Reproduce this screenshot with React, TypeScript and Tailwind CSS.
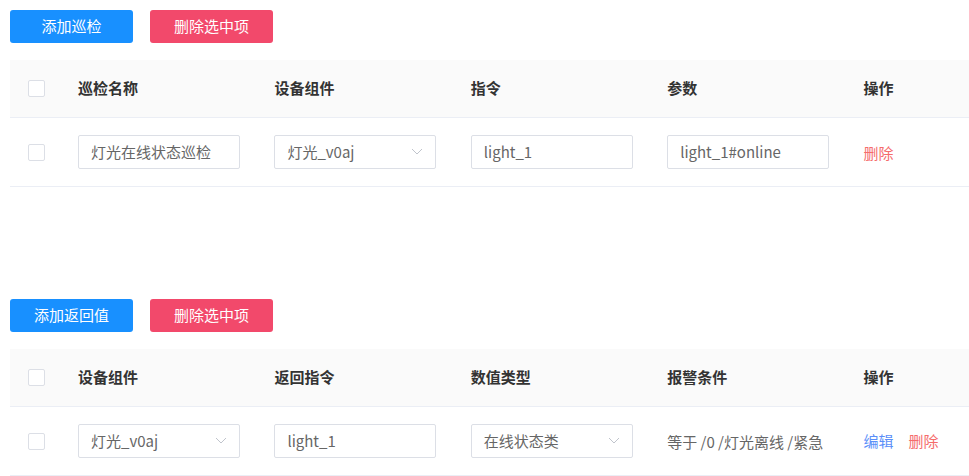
import React from 'react';

const font = { fontFamily: '"Noto Sans CJK SC", "Noto Sans", sans-serif' };

function Btn({ children, tone }: { children: React.ReactNode; tone: 'blue' | 'red' }) {
	return (
		<button
			className={
				'h-[33px] w-[123px] rounded-[3px] text-[15px] text-white ' +
				(tone === 'blue' ? 'bg-[#1890ff]' : 'bg-[#f2496b]')
			}
		>
			{children}
		</button>
	);
}

function Check() {
	return <span className="block h-[17px] w-[17px] rounded-[2px] border border-[#dcdfe6] bg-white" />;
}

function Field({ value, select }: { value: string; select?: boolean }) {
	return (
		<div className="flex h-[34px] w-[162px] items-center justify-between rounded-[2px] border border-[#dcdfe6] bg-white pl-[12px] pr-[12px] text-[15px] text-[#666]">
			<span>{value}</span>
			{select && (
				<svg width="12" height="8" viewBox="0 0 12 8" fill="none">
					<path d="M1 1l5 5 5-5" stroke="#c0c4cc" strokeWidth="1" />
				</svg>
			)}
		</div>
	);
}

const cols = 'grid grid-cols-[52px_196.4px_196.4px_196.4px_196.4px_1fr]';

function Table({ heads, row }: { heads: string[]; row: React.ReactNode[] }) {
	return (
		<div className="mt-[17px] w-[959px]">
			<div className={cols + ' h-[58px] items-center border-b border-[#ebeef5] bg-[#fafafa] text-[15px] font-semibold text-[#333]'}>
				<div className="flex justify-center">
					<Check />
				</div>
				{heads.map((h) => (
					<div key={h} className="px-4">
						{h}
					</div>
				))}
			</div>
			<div className={cols + ' h-[69px] items-center border-b border-[#ebeef5]'}>
				<div className="flex justify-center">
					<Check />
				</div>
				{row.map((c, i) => (
					<div key={i} className="px-4">
						{c}
					</div>
				))}
			</div>
		</div>
	);
}

export default function App() {
	return (
		<div className="min-h-[476px] bg-white pl-[10px] pt-[10px]" style={font}>
			<div className="flex gap-[17px]">
				<Btn tone="blue">添加巡检</Btn>
				<Btn tone="red">删除选中项</Btn>
			</div>
			<Table
				heads={['巡检名称', '设备组件', '指令', '参数', '操作']}
				row={[
					<Field value="灯光在线状态巡检" />,
					<Field value="灯光_v0aj" select />,
					<Field value="light_1" />,
					<Field value="light_1#online" />,
					<span className="text-[15px] text-[#f56c6c]">删除</span>,
				]}
			/>
			<div className="mt-[112px] flex gap-[17px]">
				<Btn tone="blue">添加返回值</Btn>
				<Btn tone="red">删除选中项</Btn>
			</div>
			<Table
				heads={['设备组件', '返回指令', '数值类型', '报警条件', '操作']}
				row={[
					<Field value="灯光_v0aj" select />,
					<Field value="light_1" />,
					<Field value="在线状态类" select />,
					<span className="whitespace-nowrap text-[15px] text-[#666]">等于 /0 /灯光离线 /紧急</span>,
					<span className="flex gap-[15px] text-[15px]">
						<span className="text-[#5b8ff9]">编辑</span>
						<span className="text-[#f56c6c]">删除</span>
					</span>,
				]}
			/>
		</div>
	);
}
